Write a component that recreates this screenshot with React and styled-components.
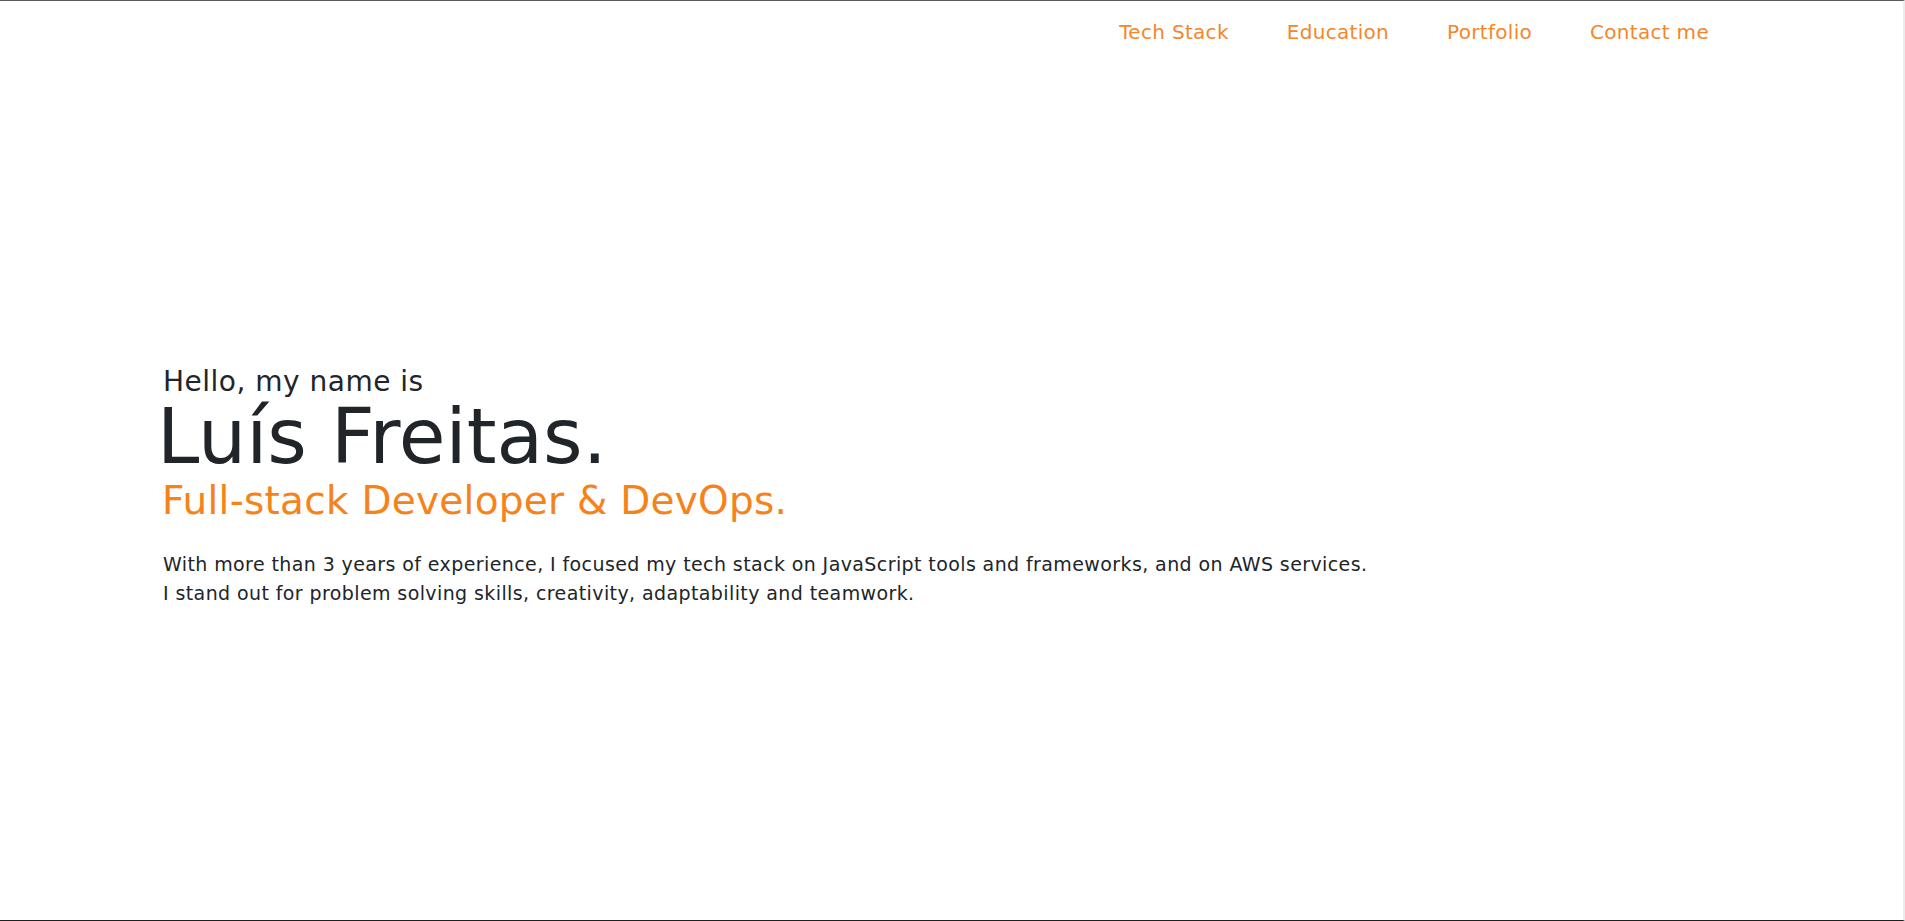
import React from "react";
import styled, { createGlobalStyle } from "styled-components";

const GlobalStyle = createGlobalStyle`
  html, body {
    margin: 0;
    padding: 0;
    background: #ffffff;
    overflow: hidden;
  }
  body {
    font-family: "DejaVu Sans", "Open Sans", sans-serif;
    color: #212529;
  }
`;

const Page = styled.div`
  box-sizing: border-box;
  height: 921px;
  border-top: 1px solid #595959;
  border-bottom: 1px solid #1f1f1f;
  border-right: 2px solid #ececec;
  display: flex;
  flex-direction: column;
`;

const Nav = styled.nav`
  display: flex;
  justify-content: flex-end;
  padding: 16px 165px 0 0;
`;

const NavLink = styled.a`
  padding: 0 29px;
  font-size: 20px;
  line-height: 30px;
  letter-spacing: 0.3px;
  color: #f5862a;
  text-decoration: none;
  cursor: pointer;
`;

const Hero = styled.section`
  padding: 318px 0 0 163px;
  display: flex;
  flex-direction: column;
  align-items: flex-start;
`;

const Greeting = styled.span`
  font-size: 28px;
  line-height: 34px;
  letter-spacing: 0.5px;
  color: #212529;
`;

const Name = styled.h1`
  margin: 0 0 0 -6px;
  font-size: 76px;
  font-weight: 400;
  line-height: 76px;
  color: #212529;
`;

const Role = styled.h2`
  margin: 3px 0 0 -1px;
  font-size: 39px;
  font-weight: 400;
  line-height: 46px;
  letter-spacing: 0.25px;
  color: #f6821a;
`;

const Description = styled.p`
  margin: 26px 0 0 0;
  font-size: 19px;
  line-height: 29px;
  letter-spacing: 0.4px;
  color: #212529;
`;

const links = ["Tech Stack", "Education", "Portfolio", "Contact me"];

export default function App() {
  return (
    <>
      <GlobalStyle />
      <Page>
        <Nav>
          {links.map((l) => (
            <NavLink key={l}>{l}</NavLink>
          ))}
        </Nav>
        <Hero>
          <Greeting>Hello, my name is</Greeting>
          <Name>Luís Freitas.</Name>
          <Role>Full-stack Developer &amp; DevOps.</Role>
          <Description>
            With more than 3 years of experience, I focused my tech stack on
            JavaScript tools and frameworks, and on AWS services.
            <br />I stand out for problem solving skills, creativity,
            adaptability and teamwork.
          </Description>
        </Hero>
      </Page>
    </>
  );
}
